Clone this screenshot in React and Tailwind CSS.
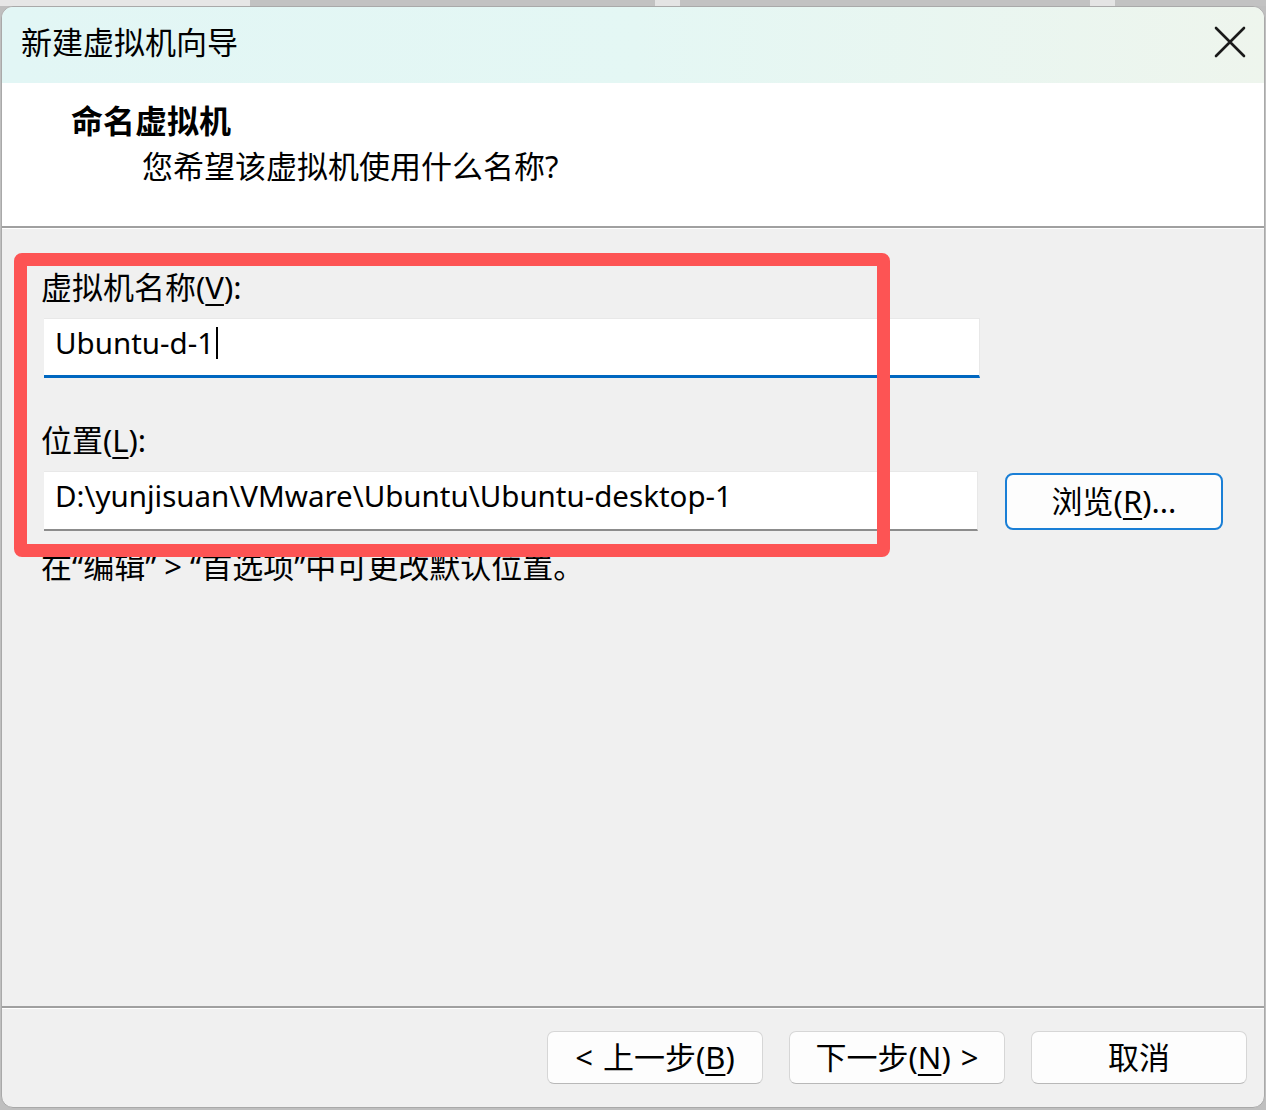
import React from "react";

const FONT = { fontFamily: '"Noto Sans", "Noto Sans CJK SC", sans-serif' };

function Key({ children }) {
  return <span className="underline decoration-[2px] underline-offset-[5px]">{children}</span>;
}

function DialogButton({ children }) {
  return (
    <button className="w-[216px] h-[53px] rounded-[7px] bg-[#fdfdfd] border border-[#d6d6d6] border-b-[#b8b8b8] text-[31px] leading-none text-black flex items-center justify-center">
      {children}
    </button>
  );
}

export default function App() {
  return (
    <div className="relative w-[1266px] h-[1110px] bg-[#bfbfbf] overflow-hidden text-black" style={FONT}>
      {/* background strip behind the dialog */}
      <div className="absolute left-0 top-0 w-full h-[6px] flex">
        <div className="w-[250px] bg-[#e6e6e6]" />
        <div className="w-[405px] bg-[#c2c2c2]" />
        <div className="w-[25px] bg-[#e4e4e4]" />
        <div className="w-[410px] bg-[#c2c2c2]" />
        <div className="w-[25px] bg-[#e4e4e4]" />
        <div className="flex-1 bg-[#c2c2c2]" />
      </div>

      {/* dialog window */}
      <div className="absolute left-[1px] top-[6px] w-[1264px] h-[1102px] rounded-[12px] border border-[#a9a9a9] bg-[#f0f0f0] flex flex-col overflow-hidden">
        {/* title bar */}
        <div className="h-[76px] shrink-0 bg-gradient-to-r from-[#e2f6f5] via-[#e4f7f4] to-[#eef5ed] flex items-center justify-between pl-[19px] pr-[18px]">
          <span className="text-[31px] leading-none -mt-[6px]">新建虚拟机向导</span>
          <svg width="32" height="32" viewBox="0 0 32 32" className="-mt-[6px]">
            <path d="M2 2 L30 30 M30 2 L2 30" stroke="#1a1a1a" strokeWidth="2.6" strokeLinecap="round" />
          </svg>
        </div>

        {/* header */}
        <div className="h-[143px] shrink-0 bg-white pl-[69px] pt-[22px]">
          <div className="text-[32px] leading-[32px] font-bold">命名虚拟机</div>
          <div className="pl-[71px] mt-[13px] text-[31px] leading-[32px]">您希望该虚拟机使用什么名称?</div>
        </div>
        <div className="h-[2px] shrink-0 bg-[#a0a0a0]" />
        <div className="h-[1px] shrink-0 bg-white" />

        {/* body */}
        <div className="flex-1 pl-[39px] pt-[38px]">
          <div className="h-[40px] leading-[40px] text-[31px]">
            虚拟机名称(<Key>V</Key>):
          </div>
          <div className="ml-[3px] mt-[11px] w-[936px] h-[60px] bg-white border-t border-r border-[#e8e8e8] border-b-[3px] border-b-[#0067c0] pl-[11px] pb-[8px] flex items-center text-[29.5px]">
            <span>Ubuntu-d-1</span>
            <span className="w-[2px] h-[32px] bg-black ml-[2px]" />
          </div>

          <div className="mt-[42px] h-[40px] leading-[40px] text-[31px]">
            位置(<Key>L</Key>):
          </div>
          <div className="ml-[3px] mt-[11px] flex items-center gap-[27px]">
            <div className="w-[934px] h-[60px] bg-white border-t border-r border-[#e8e8e8] border-b-[2px] border-b-[#8c8c8c] pl-[11px] pb-[8px] flex items-center text-[29.5px]">
              D:\yunjisuan\VMware\Ubuntu\Ubuntu-desktop-1
            </div>
            <button className="w-[218px] h-[57px] rounded-[8px] bg-[#fdfdfd] border-[2px] border-[#1a7fd6] text-[31px] leading-none flex items-center justify-center">
              浏览(<Key>R</Key>)...
            </button>
          </div>

          <div className="mt-[15px] h-[40px] leading-[40px] text-[31px]">
            在“编辑” &gt; “首选项”中可更改默认位置。
          </div>
        </div>

        {/* footer */}
        <div className="h-[2px] shrink-0 bg-[#a0a0a0]" />
        <div className="h-[1px] shrink-0 bg-white" />
        <div className="h-[98px] shrink-0 flex justify-end items-start gap-[26px] pt-[22px] pr-[17px]">
          <DialogButton>
            <span className="mr-[10px]">&lt;</span>上一步(<Key>B</Key>)
          </DialogButton>
          <DialogButton>
            下一步(<Key>N</Key>)<span className="ml-[10px]">&gt;</span>
          </DialogButton>
          <DialogButton>取消</DialogButton>
        </div>
      </div>

      {/* red annotation frame */}
      <div className="absolute left-[14px] top-[253px] w-[876px] h-[304px] border-[13px] border-[#fd5454] rounded-[8px]" />
    </div>
  );
}
